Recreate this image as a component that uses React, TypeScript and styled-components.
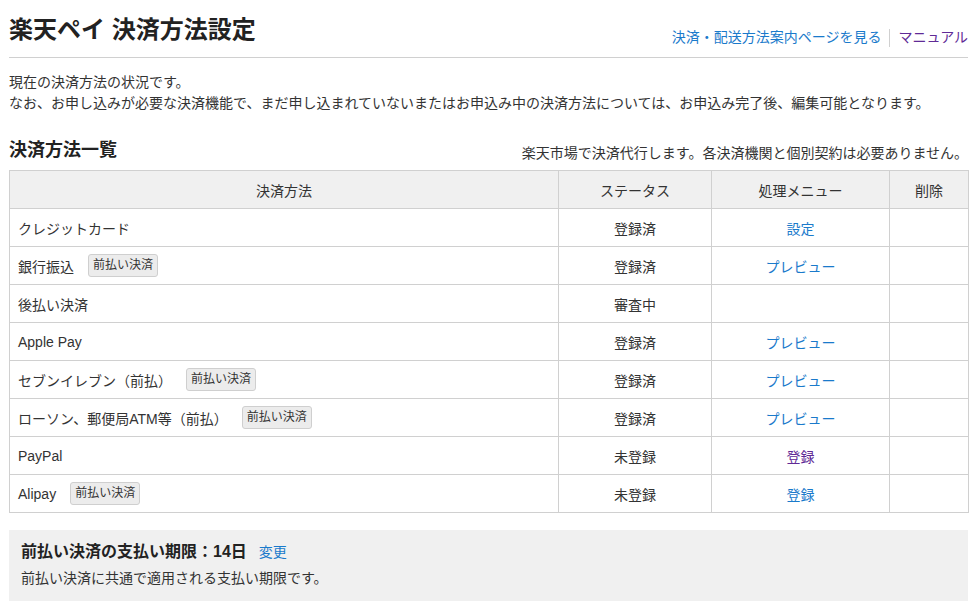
import React from "react";
import styled, { createGlobalStyle } from "styled-components";

const GlobalStyle = createGlobalStyle`
  html, body { margin: 0; padding: 0; background: #fff; }
  body {
    font-family: "Liberation Sans", "Noto Sans CJK JP", sans-serif;
    color: #333;
    font-size: 14px;
  }
`;

const Page = styled.div`
  padding: 0 7px 0 9px;
  width: 959px;
`;

const Header = styled.header`
  display: flex;
  justify-content: space-between;
  align-items: flex-end;
  padding: 12px 0 9px;
  border-bottom: 1px solid #d0d0d0;
`;

const Title = styled.h1`
  margin: 0;
  font-size: 24px;
  line-height: 36px;
  font-weight: bold;
  color: #222;
`;

const HeaderLinks = styled.nav`
  display: flex;
  align-items: center;
  line-height: 21px;
  font-size: 14px;
`;

const Link = styled.a<{ $visited?: boolean }>`
  color: ${(p) => (p.$visited ? "#5f2a96" : "#1a7acb")};
  text-decoration: none;
  cursor: pointer;
`;

const Sep = styled.span`
  display: inline-block;
  width: 1px;
  height: 18px;
  background: #d0d0d0;
  margin: 0 8px;
`;

const Intro = styled.p`
  margin: 14px 0 0;
  font-size: 14px;
  line-height: 21px;
`;

const SectionHead = styled.div`
  display: flex;
  justify-content: space-between;
  align-items: flex-end;
  margin-top: 20px;
`;

const SectionTitle = styled.h2`
  margin: 0;
  padding-top: 3px;
  font-size: 18px;
  line-height: 27px;
  font-weight: bold;
  color: #222;
`;

const SectionNote = styled.span`
  font-size: 14px;
  line-height: 21px;
`;

const Table = styled.table`
  margin-top: 6px;
  width: 959px;
  border-collapse: collapse;
  table-layout: fixed;
`;

const Th = styled.th<{ $w: number }>`
  width: ${(p) => p.$w}px;
  height: 37px;
  padding: 0;
  background: #f0f0f0;
  border: 1px solid #d0d0d0;
  font-weight: normal;
  font-size: 14px;
  color: #333;
  text-align: center;
`;

const Td = styled.td<{ $center?: boolean }>`
  height: 37px;
  padding: 0 8px;
  border: 1px solid #d0d0d0;
  font-size: 14px;
  text-align: ${(p) => (p.$center ? "center" : "left")};
  vertical-align: middle;
`;

const NameWrap = styled.div`
  display: flex;
  align-items: center;
  gap: 14px;
`;

const Badge = styled.span`
  display: inline-block;
  padding: 0 4px;
  height: 21px;
  line-height: 21px;
  font-size: 12px;
  background: #ececec;
  border: 1px solid #cfcfcf;
  border-radius: 3px;
  color: #333;
`;

const InfoBox = styled.section`
  margin-top: 17px;
  background: #f0f0f0;
  padding: 10px 12px 12px;
`;

const InfoTitle = styled.div`
  display: flex;
  align-items: baseline;
  gap: 12px;
  line-height: 24px;
`;

const InfoStrong = styled.strong`
  font-size: 16px;
  color: #222;
`;

const InfoText = styled.p`
  margin: 4px 0 0;
  font-size: 14px;
  line-height: 21px;
`;

type Row = {
  name: string;
  badge?: boolean;
  status: string;
  action?: string;
  actionLink?: "blue" | "visited";
};

const rows: Row[] = [
  { name: "クレジットカード", status: "登録済", action: "設定", actionLink: "blue" },
  { name: "銀行振込", badge: true, status: "登録済", action: "プレビュー", actionLink: "blue" },
  { name: "後払い決済", status: "審査中" },
  { name: "Apple Pay", status: "登録済", action: "プレビュー", actionLink: "blue" },
  { name: "セブンイレブン（前払）", badge: true, status: "登録済", action: "プレビュー", actionLink: "blue" },
  { name: "ローソン、郵便局ATM等（前払）", badge: true, status: "登録済", action: "プレビュー", actionLink: "blue" },
  { name: "PayPal", status: "未登録", action: "登録", actionLink: "visited" },
  { name: "Alipay", badge: true, status: "未登録", action: "登録", actionLink: "blue" },
];

export default function App() {
  return (
    <Page>
      <GlobalStyle />
      <Header>
        <Title>楽天ペイ 決済方法設定</Title>
        <HeaderLinks>
          <Link>決済・配送方法案内ページを見る</Link>
          <Sep />
          <Link $visited>マニュアル</Link>
        </HeaderLinks>
      </Header>
      <Intro>
        現在の決済方法の状況です。
        <br />
        なお、お申し込みが必要な決済機能で、まだ申し込まれていないまたはお申込み中の決済方法については、お申込み完了後、編集可能となります。
      </Intro>
      <SectionHead>
        <SectionTitle>決済方法一覧</SectionTitle>
        <SectionNote>楽天市場で決済代行します。各決済機関と個別契約は必要ありません。</SectionNote>
      </SectionHead>
      <Table>
        <thead>
          <tr>
            <Th $w={548}>決済方法</Th>
            <Th $w={152}>ステータス</Th>
            <Th $w={177}>処理メニュー</Th>
            <Th $w={78}>削除</Th>
          </tr>
        </thead>
        <tbody>
          {rows.map((r) => (
            <tr key={r.name}>
              <Td>
                <NameWrap>
                  <span>{r.name}</span>
                  {r.badge && <Badge>前払い決済</Badge>}
                </NameWrap>
              </Td>
              <Td $center>{r.status}</Td>
              <Td $center>
                {r.action && <Link $visited={r.actionLink === "visited"}>{r.action}</Link>}
              </Td>
              <Td $center />
            </tr>
          ))}
        </tbody>
      </Table>
      <InfoBox>
        <InfoTitle>
          <InfoStrong>前払い決済の支払い期限：14日</InfoStrong>
          <Link>変更</Link>
        </InfoTitle>
        <InfoText>前払い決済に共通で適用される支払い期限です。</InfoText>
      </InfoBox>
    </Page>
  );
}
